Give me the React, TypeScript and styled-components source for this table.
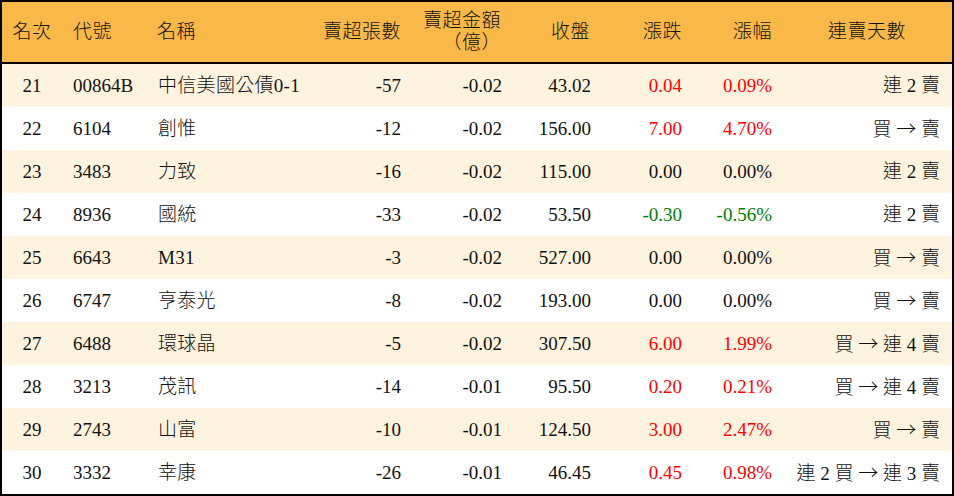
import React from 'react'
import styled, { createGlobalStyle } from 'styled-components'

const GlobalStyle = createGlobalStyle`
    html, body {
        margin: 0;
        padding: 0;
        background: #ffffff;
    }
`

const COLUMNS = '60px 85px 153px 112px 100px 89px 91px 90px 170px'

const TableFrame = styled.div`
    width: 954px;
    box-sizing: border-box;
    border: 2px solid #000;
    font-family: "Liberation Serif", "Noto Sans CJK TC", serif;
    font-size: 19px;
    font-weight: 300;
    color: #111;
`

const HeaderRow = styled.div`
    display: grid;
    grid-template-columns: ${COLUMNS};
    height: 60px;
    background: #fab849;
    border-bottom: 2px solid #000;
`

interface RowProps {
    shaded: boolean
}
const BodyRow = styled.div<RowProps>`
    display: grid;
    grid-template-columns: ${COLUMNS};
    height: 43px;
    background: ${({ shaded }) => (shaded ? '#fef3df' : '#ffffff')};
`

type Align = 'left' | 'center' | 'right'

interface CellProps {
    align: Align
    pad?: number
}
const Cell = styled.div<CellProps>`
    display: flex;
    align-items: center;
    justify-content: ${({ align }) => (align === 'left' ? 'flex-start' : align === 'right' ? 'flex-end' : 'center')};
    text-align: ${({ align }) => align};
    padding: ${({ align, pad = 10 }) => (align === 'left' ? `0 0 0 ${pad + 1}px` : align === 'right' ? `0 ${pad}px 0 0` : '0')};
    white-space: nowrap;
    line-height: 22px;
`

const HeadText = styled.span`
    letter-spacing: 0.5px;
`

const NameText = styled.span`
    letter-spacing: 0.3px;
`

const StreakText = styled.span`
    white-space: pre;
`

const Arrow = styled.span`
    font-family: "Noto Sans CJK JP", "DejaVu Sans", sans-serif;
    font-weight: 300;
    font-size: 20px;
`

interface ChangeProps {
    tone: 'up' | 'down' | 'flat'
}
const ChangeText = styled.span<ChangeProps>`
    color: ${({ tone }) => (tone === 'up' ? '#ff0000' : tone === 'down' ? '#008000' : '#111')};
`

const headers: { label: React.ReactNode; align: Align; pad?: number }[] = [
    { label: '名次', align: 'center' },
    { label: '代號', align: 'left' },
    { label: '名稱', align: 'left', pad: 9 },
    { label: '賣超張數', align: 'right', pad: 11 },
    { label: <>賣超金額<br />（億）</>, align: 'right', pad: 11 },
    { label: '收盤', align: 'right', pad: 11 },
    { label: '漲跌', align: 'right', pad: 10 },
    { label: '漲幅', align: 'right', pad: 10 },
    { label: '連賣天數', align: 'center' },
]

const rows = [
    ['21', '00864B', '中信美國公債0-1', '-57', '-0.02', '43.02', '0.04', '0.09%', '連 2 賣'],
    ['22', '6104', '創惟', '-12', '-0.02', '156.00', '7.00', '4.70%', '買 → 賣'],
    ['23', '3483', '力致', '-16', '-0.02', '115.00', '0.00', '0.00%', '連 2 賣'],
    ['24', '8936', '國統', '-33', '-0.02', '53.50', '-0.30', '-0.56%', '連 2 賣'],
    ['25', '6643', 'M31', '-3', '-0.02', '527.00', '0.00', '0.00%', '買 → 賣'],
    ['26', '6747', '亨泰光', '-8', '-0.02', '193.00', '0.00', '0.00%', '買 → 賣'],
    ['27', '6488', '環球晶', '-5', '-0.02', '307.50', '6.00', '1.99%', '買 → 連 4 賣'],
    ['28', '3213', '茂訊', '-14', '-0.01', '95.50', '0.20', '0.21%', '買 → 連 4 賣'],
    ['29', '2743', '山富', '-10', '-0.01', '124.50', '3.00', '2.47%', '買 → 賣'],
    ['30', '3332', '幸康', '-26', '-0.01', '46.45', '0.45', '0.98%', '連 2 買 → 連 3 賣'],
]

const toneOf = (change: string): ChangeProps['tone'] => {
    const n = parseFloat(change)
    if (n > 0) return 'up'
    if (n < 0) return 'down'
    return 'flat'
}

// splits the streak text so the arrow can use a wider glyph
const Streak = ({ text }: { text: string }) => {
    const parts = text.split('→')
    return (
        <StreakText>
            {parts.map((p, i) => (
                <React.Fragment key={i}>
                    {i > 0 && <Arrow>→</Arrow>}
                    {p}
                </React.Fragment>
            ))}
        </StreakText>
    )
}

export default function App() {
    return (
        <>
            <GlobalStyle />
            <TableFrame>
                <HeaderRow>
                    {headers.map((h, i) => (
                        <Cell key={i} align={h.align} pad={h.pad}>
                            <HeadText>{h.label}</HeadText>
                        </Cell>
                    ))}
                </HeaderRow>
                {rows.map((r, i) => {
                    const tone = toneOf(r[6])
                    return (
                        <BodyRow key={r[0]} shaded={i % 2 === 0}>
                            <Cell align="center">{r[0]}</Cell>
                            <Cell align="left">{r[1]}</Cell>
                            <Cell align="left" pad={10}><NameText>{r[2]}</NameText></Cell>
                            <Cell align="right" pad={11}>{r[3]}</Cell>
                            <Cell align="right" pad={10}>{r[4]}</Cell>
                            <Cell align="right" pad={10}>{r[5]}</Cell>
                            <Cell align="right">
                                <ChangeText tone={tone}>{r[6]}</ChangeText>
                            </Cell>
                            <Cell align="right">
                                <ChangeText tone={tone}>{r[7]}</ChangeText>
                            </Cell>
                            <Cell align="right" pad={12}><Streak text={r[8]} /></Cell>
                        </BodyRow>
                    )
                })}
            </TableFrame>
        </>
    )
}
